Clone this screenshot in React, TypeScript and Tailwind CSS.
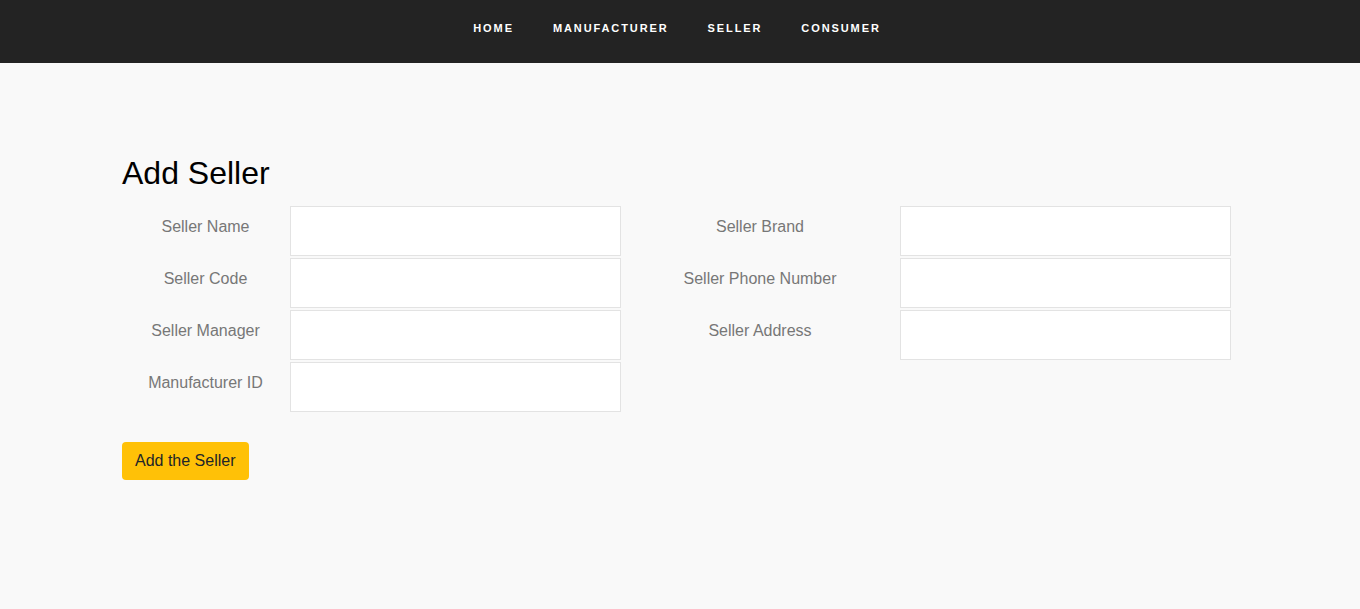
import React from "react";

const Field = ({ label, labelW }: { label: string; labelW: string }) => (
  <div className="flex">
    <div className={`${labelW} shrink-0 pt-[11px] pr-[1px] text-center text-[16px] leading-[20px] text-[#777]`}>{label}</div>
    <input className="w-[331px] h-[50px] bg-white border border-[#e3e3e3] outline-none px-3" />
  </div>
);

export default function App() {
  return (
    <div className="min-h-[609px] bg-[#f9f9f9]" style={{ fontFamily: '"Liberation Sans", Arial, sans-serif' }}>
      <nav className="h-[63px] bg-[#232323] flex justify-center items-start pt-[21px] pr-[6px]">
        <div className="flex gap-[39px] text-[11px] font-bold tracking-[1.9px] text-white leading-[14px]">
          <span>HOME</span>
          <span>MANUFACTURER</span>
          <span>SELLER</span>
          <span>CONSUMER</span>
        </div>
      </nav>
      <main className="pl-[122px] pt-[91px]">
        <h1 className="text-[32px] leading-[38px] text-black mb-[14px]">Add Seller</h1>
        <div className="flex">
          <div className="flex flex-col gap-[2px]">
            <Field label="Seller Name" labelW="w-[168px]" />
            <Field label="Seller Code" labelW="w-[168px]" />
            <Field label="Seller Manager" labelW="w-[168px]" />
            <Field label="Manufacturer ID" labelW="w-[168px]" />
          </div>
          <div className="flex flex-col gap-[2px]">
            <Field label="Seller Brand" labelW="w-[279px]" />
            <Field label="Seller Phone Number" labelW="w-[279px]" />
            <Field label="Seller Address" labelW="w-[279px]" />
          </div>
        </div>
        <button className="mt-[30px] h-[38px] px-[13px] rounded-[4px] bg-[#ffc107] text-[16px] text-[#212529] leading-[24px]">
          Add the Seller
        </button>
      </main>
    </div>
  );
}
